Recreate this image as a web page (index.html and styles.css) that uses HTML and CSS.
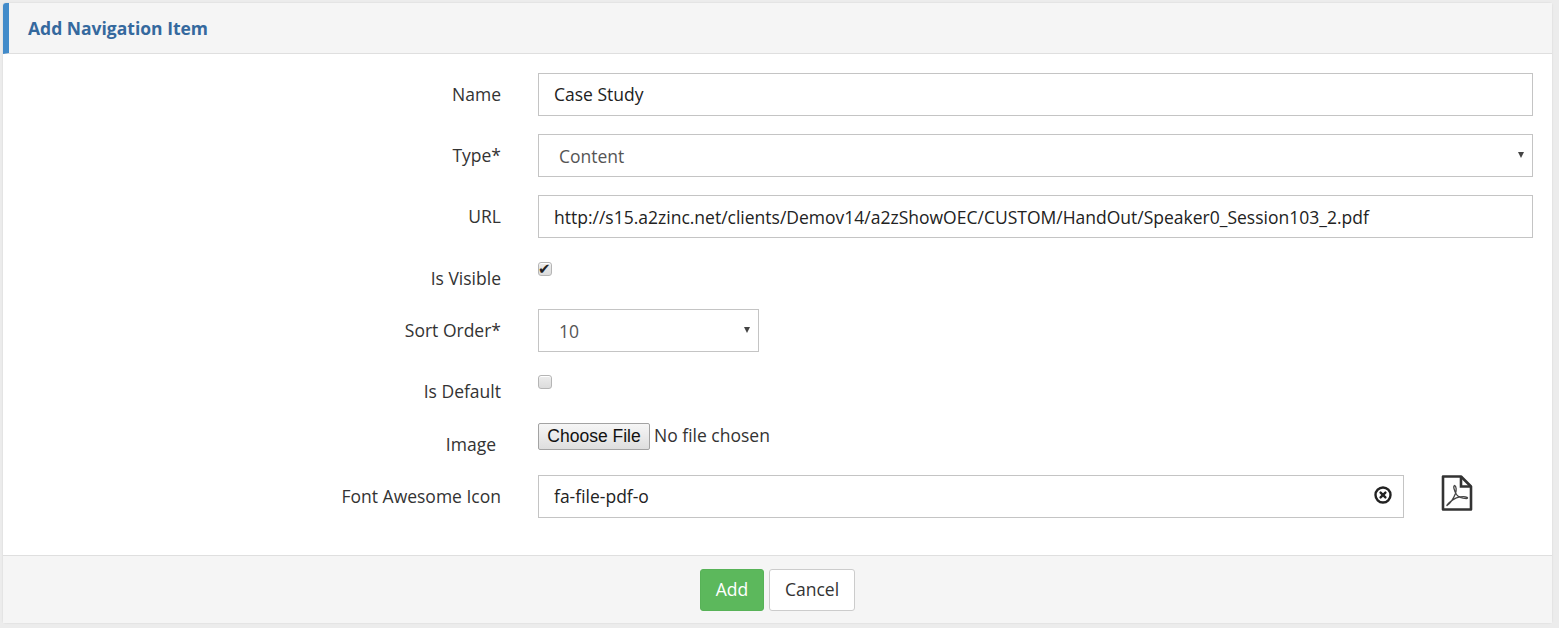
FILE: index.html
```html
<!DOCTYPE html>
<html lang="en">
<head>
<meta charset="utf-8">
<title>Add Navigation Item</title>
<link rel="stylesheet" href="styles.css">
</head>
<body>
<div class="panel">
  <div class="panel-head"><h1 class="panel-title">Add Navigation Item</h1></div>
  <form class="panel-body">
    <div class="row">
      <label class="row-label">Name</label>
      <div class="row-control"><input class="field field-name" type="text" value="Case Study"></div>
    </div>
    <div class="row">
      <label class="row-label">Type*</label>
      <div class="row-control select-wrap"><select class="field field-select"><option>Content</option></select></div>
    </div>
    <div class="row">
      <label class="row-label">URL</label>
      <div class="row-control"><input class="field" type="text" value="http://s15.a2zinc.net/clients/Demov14/a2zShowOEC/CUSTOM/HandOut/Speaker0_Session103_2.pdf"></div>
    </div>
    <div class="row row-check">
      <label class="row-label label-visible">Is Visible</label>
      <div class="row-control"><input class="check" type="checkbox" checked></div>
    </div>
    <div class="row">
      <label class="row-label">Sort Order*</label>
      <div class="row-control select-wrap select-small"><select class="field field-select"><option>10</option></select></div>
    </div>
    <div class="row row-check">
      <label class="row-label">Is Default</label>
      <div class="row-control"><input class="check check-default" type="checkbox"></div>
    </div>
    <div class="row row-file">
      <label class="row-label label-image">Image</label>
      <div class="row-control"><input class="file" type="file"></div>
    </div>
    <div class="row row-last">
      <label class="row-label">Font Awesome Icon</label>
      <div class="row-control icon-control">
        <div class="clear-wrap">
          <input class="field field-name" type="text" value="fa-file-pdf-o">
          <svg class="clear-icon" width="18" height="18" viewBox="0 0 18 18" aria-hidden="true">
            <circle cx="9" cy="9" r="7.5" fill="none" stroke="#222" stroke-width="2.4"/>
            <path d="M6.6 6.6l4.8 4.8M11.4 6.6l-4.8 4.8" stroke="#222" stroke-width="2.4" stroke-linecap="round"/>
          </svg>
        </div>
        <svg class="pdf-icon" width="32" height="36" viewBox="0 0 32 36" aria-hidden="true">
          <path d="M2 1.5H20L30 11.5V34.5H2Z" fill="#fff" stroke="#333" stroke-width="2.6" stroke-linejoin="round"/>
          <path d="M20 1.5V11.5H30" fill="none" stroke="#333" stroke-width="2.6"/>
          <path d="M6 30.5C9 28.5 12.5 23.5 14.5 18.5C15.5 15.5 15.5 11 13.5 10.5C12 11 13 15.5 15.5 19.5C17.5 22.5 20.5 23.5 25.5 23.5C27 23.5 27 22 24.5 21.8C19.5 21.3 13 23.5 9 27C7 28.8 5.5 30.5 6 30.5Z" fill="none" stroke="#444" stroke-width="1.3"/>
        </svg>
      </div>
    </div>
  </form>
  <div class="panel-foot">
    <button class="btn btn-add" type="button">Add</button>
    <button class="btn btn-cancel" type="button">Cancel</button>
  </div>
</div>
</body>
</html>
```
FILE: styles.css
```css
* { box-sizing: border-box; }
html, body { height: 100%; }
body {
  margin: 0;
  padding: 3px 7px 5px 3px;
  background: #ececec;
  font-family: "Open Sans", sans-serif;
  font-size: 17.5px;
  color: #333;
  overflow: hidden;
}
.panel {
  background: #fff;
  border-radius: 3px;
  height: 620px;
  display: flex;
  flex-direction: column;
  box-shadow: 0 0 2px rgba(0,0,0,.12);
}
.panel-head {
  height: 51px;
  background: #f5f5f5;
  border-left: 6px solid #428bca;
  border-bottom: 1px solid #dfdfdf;
  border-top-left-radius: 3px;
  display: flex;
  align-items: center;
  padding-left: 19px;
}
.panel-title {
  margin: 0;
  font-size: 17.5px;
  font-weight: 700;
  color: #35699e;
}
.panel-body {
  flex: 1;
  padding-top: 19px;
  padding-right: 19px;
}
.row { display: flex; margin-bottom: 18px; min-height: 43px; }
.row-check { min-height: 35px; }
.row-file { min-height: 34px; }
.row-last { margin-bottom: 0; }
.row-label {
  width: 498px;
  flex: none;
  text-align: right;
  line-height: 22px;
  padding-top: 10px;
}
.label-visible { padding-top: 11px; }
.label-image { padding-right: 5px; }
.row-control { flex: 1; margin-left: 37px; min-width: 0; }
.field {
  display: block;
  width: 100%;
  height: 43px;
  border: 1px solid #c4c4c4;
  background: #fff;
  padding: 0 15px;
  font-family: "Open Sans", sans-serif;
  font-size: 17.5px;
  color: #222;
  border-radius: 0;
  outline: none;
}
.field-name { padding-bottom: 2px; }
.field-select {
  appearance: none;
  padding-left: 20px;
  color: #555;
}
.select-wrap { position: relative; }
.select-wrap::after {
  content: "";
  position: absolute;
  right: 9px;
  top: 18px;
  border-left: 3.5px solid transparent;
  border-right: 3.5px solid transparent;
  border-top: 6px solid #444;
}
.select-small { flex: none; width: 221px; }
.check {
  appearance: none;
  display: block;
  position: relative;
  width: 14px;
  height: 14px;
  margin: 6px 0 0;
  border: 1px solid #b5b5b5;
  border-radius: 3px;
  background: linear-gradient(#ededed, #dcdcdc);
  box-shadow: inset 0 1px 0 #fff;
}
.check-default { margin-top: 5px; }
.check:checked::after {
  content: "\2714";
  position: absolute;
  left: -1px;
  top: 0;
  font: 15px/12px "DejaVu Sans", sans-serif;
  color: #222;
}
.file {
  display: block;
  width: 300px;
  font-family: "Open Sans", sans-serif;
  font-size: 17.5px;
  color: #333;
}
.file::file-selector-button {
  font-family: "Liberation Sans", Arial, sans-serif;
  font-size: 17.5px;
  height: 27px;
  width: 112px;
  padding: 0;
  margin-right: 4px;
  color: #111;
  background: linear-gradient(#f6f6f6, #dedede);
  border: 1px solid #a3a3a3;
  border-radius: 2px;
}
.icon-control { display: flex; }
.clear-wrap { position: relative; width: 866px; flex: none; }
.clear-icon { position: absolute; right: 12px; top: 11px; }
.pdf-icon { flex: none; margin-left: 37px; }
.panel-foot {
  height: 68px;
  background: #f5f5f5;
  border-top: 1px solid #dfdfdf;
  display: flex;
  justify-content: center;
  align-items: flex-start;
  gap: 5px;
  padding-top: 13px;
}
.btn {
  height: 42px;
  font-family: "Open Sans", sans-serif;
  font-size: 17.5px;
  border-radius: 3px;
  padding: 0 0 2px;
}
.btn-add {
  width: 64px;
  background: #5cb85c;
  border: 1px solid #57b257;
  color: #fff;
}
.btn-cancel {
  width: 86px;
  background: #fff;
  border: 1px solid #ccc;
  color: #333;
}
```
